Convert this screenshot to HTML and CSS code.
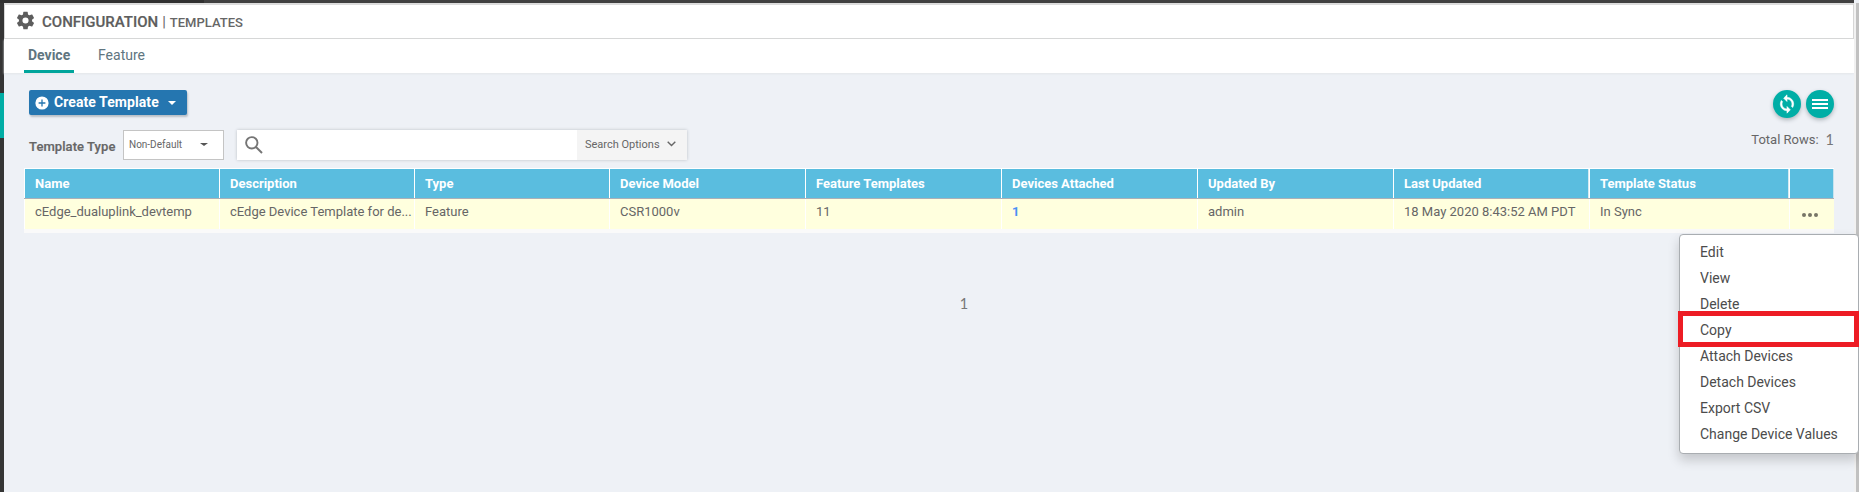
FILE: index.html
```html
<!DOCTYPE html>
<html lang="en">
<head>
<meta charset="utf-8">
<title>Configuration | Templates</title>
<link rel="stylesheet" href="styles.css">
</head>
<body>
<div class="topbar"><div class="topbar-left"></div></div>
<div class="shell">
  <nav class="rail"><div class="rail-active"></div></nav>
  <main class="content">
    <header class="page-header">
      <svg class="gear" viewBox="0 0 24 24"><path d="M19.43 12.98c.04-.32.07-.64.07-.98s-.03-.66-.07-.98l2.11-1.65c.19-.15.24-.42.12-.64l-2-3.46c-.12-.22-.39-.3-.61-.22l-2.49 1c-.52-.4-1.08-.73-1.69-.98l-.38-2.65A.49.49 0 0 0 14 2h-4a.49.49 0 0 0-.49.42l-.38 2.65c-.61.25-1.17.59-1.69.98l-2.49-1c-.23-.09-.49 0-.61.22l-2 3.46c-.13.22-.07.49.12.64l2.11 1.65c-.04.32-.07.65-.07.98s.03.66.07.98l-2.11 1.65c-.19.15-.24.42-.12.64l2 3.46c.12.22.39.3.61.22l2.49-1c.52.4 1.08.73 1.69.98l.38 2.65c.03.24.24.42.49.42h4c.25 0 .46-.18.49-.42l.38-2.65c.61-.25 1.17-.59 1.69-.98l2.49 1c.23.09.49 0 .61-.22l2-3.46c.12-.22.07-.49-.12-.64l-2.11-1.65zM12 15.5a3.5 3.5 0 1 1 0-7 3.5 3.5 0 0 1 0 7z"/></svg>
      <h1 class="title">CONFIGURATION</h1><span class="divider">|</span><span class="subtitle">TEMPLATES</span>
    </header>
    <div class="tabs">
      <a class="tab tab-active">Device</a>
      <a class="tab">Feature</a>
    </div>
    <section class="panel">
      <div class="actions">
        <button class="create">
          <svg class="plus" viewBox="0 0 14 14"><circle cx="7" cy="7" r="6.6" fill="#fff"/><path d="M7 3.6v6.8M3.6 7h6.8" stroke="#2576b0" stroke-width="1.3"/></svg>
          <span class="create-label">Create Template</span>
          <i class="caret caret-light"></i>
        </button>
        <div class="round-buttons">
          <button class="round"><svg viewBox="0 0 24 24"><path d="M12 4V1L8 5l4 4V6c3.31 0 6 2.69 6 6 0 1.01-.25 1.97-.7 2.8l1.46 1.46A7.93 7.93 0 0 0 20 12c0-4.42-3.58-8-8-8zm0 14c-3.31 0-6-2.69-6-6 0-1.01.25-1.97.7-2.8L5.24 7.74A7.93 7.93 0 0 0 4 12c0 4.42 3.58 8 8 8v3l4-4-4-4v3z" stroke="#fff" stroke-width=".7"/></svg></button>
          <button class="round"><svg class="bars" viewBox="0 0 16 10"><path d="M0 0h16v2H0zM0 4h16v2H0zM0 8h16v2H0z"/></svg></button>
        </div>
      </div>
      <div class="filters">
        <span class="filter-label">Template Type</span>
        <div class="select"><span>Non-Default</span><i class="caret"></i></div>
        <div class="search">
          <svg class="magnifier" viewBox="0 0 18 18"><circle cx="6.8" cy="6.8" r="5.7"/><path d="M11 11l6 6"/></svg>
          <div class="search-options"><span>Search Options</span><svg class="chevron" viewBox="0 0 9 6"><path d="M.7.8l3.8 3.8L8.3.8"/></svg></div>
        </div>
        <div class="total"><span>Total Rows:</span><span class="num">1</span></div>
      </div>
      <div class="table">
        <div class="row head">
          <div>Name</div><div>Description</div><div>Type</div><div>Device Model</div><div>Feature Templates</div><div>Devices Attached</div><div>Updated By</div><div class="gap-right">Last Updated</div><div class="gap-right">Template Status</div><div></div>
        </div>
        <div class="row data">
          <div>cEdge_dualuplink_devtemp</div><div>cEdge Device Template for de...</div><div>Feature</div><div>CSR1000v</div><div>11</div><div class="link">1</div><div>admin</div><div>18 May 2020 8:43:52 AM PDT</div><div>In Sync</div>
          <div class="more"><i></i><i></i><i></i></div>
        </div>
      </div>
      <div class="pager num">1</div>
    </section>
  </main>
  <div class="scrollbar"></div>
</div>
<ul class="menu">
  <li>Edit</li><li>View</li><li>Delete</li><li class="marked">Copy</li><li>Attach Devices</li><li>Detach Devices</li><li>Export CSV</li><li>Change Device Values</li>
</ul>
</body>
</html>
```
FILE: styles.css
```css
*, *::after { box-sizing: border-box; }
body {
  margin: 0; height: 492px; overflow: hidden; position: relative;
  display: flex; flex-direction: column;
  font-family: Roboto, "Liberation Sans", sans-serif; font-size: 13px; color: #666;
  background: #eef1f6;
}
button { border: 0; padding: 0; font: inherit; }
.topbar { height: 3px; background: #404040; margin-right: 5px; }
.topbar-left { width: 204px; height: 3px; background: #303030; }
.shell { flex: 1; display: flex; }
.rail { width: 4px; background: #353535; padding-top: 90px; }
.rail-active { height: 45px; background: #00ada5; }
.content { flex: 1; min-width: 0; }
.scrollbar { width: 5px; background: #c1c1c1; border-left: 2px solid #f1f1f1; }

.page-header {
  height: 36px; display: flex; align-items: center; padding: 0 0 0 10px;
  background: #fff; border: 1px solid #d6d6d6; border-top: 2px solid #dcdcdc;
}
.gear { width: 21px; height: 21px; fill: #5d5d5d; margin-top: -3px; }
.title { margin: 0 0 0 6px; font-size: 15px; font-weight: 500; line-height: 18px; color: #5d5d5d; -webkit-text-stroke: .2px #5d5d5d; }
.divider { margin: 0 4px 0 4px; font-size: 15px; }
.subtitle { font-size: 13px; font-weight: 500; padding-top: 2px; }
.tabs { height: 34px; display: flex; background: #fff; padding-left: 20px; gap: 20px; box-shadow: 0 1px 2px #e3e6ea; }
.tab { height: 34px; padding: 0 4px; font-size: 14px; line-height: 33px; color: #607580; }
.tab-active { width: 50px; font-weight: 700; border-bottom: 3px solid #00a59c; }

.panel { padding: 17px 20px 0; }
.actions { height: 40px; display: flex; align-items: flex-start; justify-content: space-between; padding-left: 5px; }
.create {
  width: 158px; height: 25px; display: flex; align-items: center; padding-left: 6px;
  background: #2576b0; color: #fff; border-radius: 2px; box-shadow: 1px 2px 2px #b9bfc7;
}
.plus { width: 14px; height: 14px; }
.create-label { margin-left: 5px; padding-bottom: 1px; font-size: 14px; font-weight: 700; letter-spacing: .07px; }
.caret { border: 4.5px solid transparent; border-top-color: #555; border-bottom: 0; }
.caret-light { margin-left: 9px; border-top-color: #fff; }
.round-buttons { display: flex; gap: 5px; }
.round { width: 28px; height: 28px; display: grid; place-items: center; border-radius: 50%; background: #00aea6; box-shadow: 0 2px 4px #aeb5bb; }
.round svg { width: 20px; height: 20px; fill: #fff; }
.round .bars { width: 16px; height: 10px; }

.filters { height: 38px; display: flex; align-items: flex-start; padding-left: 5px; }
.filter-label { width: 94px; padding-top: 9px; line-height: 16px; font-weight: 500; letter-spacing: .07px; white-space: nowrap; -webkit-text-stroke: .2px #666; }
.select { width: 101px; height: 30px; display: flex; justify-content: space-between; align-items: center; padding: 0 15px 2px 5px; border: 1px solid #c4c4c4; background: #fff; font-size: 10px; }
.select .caret { margin-top: 1px; border-left-width: 4px; border-right-width: 4px; border-top-width: 3px; }
.search { width: 450px; height: 30px; margin-left: 13px; display: flex; justify-content: space-between; background: #fff; box-shadow: 0 0 3px #bcc0c5; }
.magnifier { width: 18px; height: 18px; margin: 6px 0 0 8px; fill: none; stroke: #757575; stroke-width: 1.9; }
.search-options { width: 110px; display: flex; align-items: center; padding: 0 0 2px 8px; background: #f4f4f4; font-size: 11px; white-space: nowrap; }
.chevron { width: 9px; height: 6px; margin-left: 7px; fill: none; stroke: #666; stroke-width: 1.4; }
.total { margin-left: auto; display: flex; gap: 7px; padding-top: 2px; line-height: 16px; }
.num { font-family: Lato, sans-serif; font-size: 14.5px; color: #777; }

.table { border-top: 1px solid #fff; }
.row { display: grid; grid-template-columns: 195px 195px 195px 196px 196px 196px 196px 196px 200px 45px; }
.row > div { border-left: 1px solid #fff; padding-left: 10px; white-space: nowrap; }
.head { height: 30px; background: #5abddf; color: #fff; font-weight: 700; line-height: 29px; border-bottom: 1px solid #aab0b8; }
.head > div:last-child { border-right: 1px solid #c7e3ee; }
.head > .gap-right { border-right: 1px solid #d5eaf2; }
.data { height: 34px; background: #ffffde; border-bottom: 4px solid #fafafa; line-height: 26px; }
.data > .link { color: #4a90f5; font-weight: 700; }
.data > .more { display: flex; gap: 2px; padding: 14px 0 0 12px; }
.more i { width: 4px; height: 4px; border-radius: 50%; background: #777566; }
.pager { padding-left: 70px; margin-top: 61px; text-align: center; line-height: 20px; }

.menu {
  position: absolute; left: 1679px; top: 234px; width: 180px; height: 220px; margin: 0; padding: 4px 0;
  list-style: none; background: #fff; border: 1px solid #a9adb1; border-radius: 4px;
  box-shadow: 0 6px 12px rgba(0,0,0,.18); color: #4c4c4c; font-size: 14px; line-height: 26px;
}
.menu li { padding-left: 20px; height: 26px; white-space: nowrap; position: relative; }
.marked::after { content: ""; position: absolute; left: -2px; top: -6px; width: 181px; height: 36px; border: 5px solid #ed1c24; }
```
